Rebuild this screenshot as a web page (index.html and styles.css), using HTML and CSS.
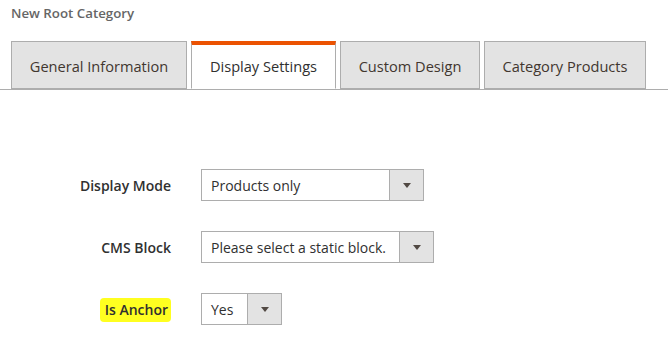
FILE: index.html
```html
<!DOCTYPE html>
<html>
<head>
<meta charset="utf-8">
<link rel="stylesheet" href="styles.css">
</head>
<body>
<div class="page">
  <div class="title">New Root Category</div>
  <div class="tabs">
    <div class="tab">General Information</div>
    <div class="tab active">Display Settings</div>
    <div class="tab">Custom Design</div>
    <div class="tab">Category Products</div>
  </div>
  <div class="form">
    <div class="row">
      <div class="label">Display Mode</div>
      <div class="select w1"><span class="val">Products only</span><span class="btn"><span class="arrow"></span></span></div>
    </div>
    <div class="row">
      <div class="label">CMS Block</div>
      <div class="select w2"><span class="val">Please select a static block.</span><span class="btn"><span class="arrow"></span></span></div>
    </div>
    <div class="row">
      <div class="label"><span class="hl">Is Anchor</span></div>
      <div class="select w3"><span class="val">Yes</span><span class="btn"><span class="arrow"></span></span></div>
    </div>
  </div>
</div>
</body>
</html>
```
FILE: styles.css
```css
html, body { margin: 0; padding: 0; background: #fff; }
body { font-family: "Open Sans", "Liberation Sans", sans-serif; color: #303030; }
.page { padding-top: 4px; }
.title { padding-left: 11px; font-size: 13.3px; font-weight: 600; color: #666; line-height: 18px; height: 18px; }
.tabs { display: flex; gap: 4px; margin-top: 19px; padding-left: 11px; border-bottom: 1px solid #adadad; height: 48px; }
.tab { box-sizing: border-box; height: 48px; margin-bottom: -1px; padding: 3px 10px 0; background: #e3e3e3; border: 1px solid #adadad; font-size: 14.6px; color: #41362f; display: flex; align-items: center; justify-content: center; line-height: 1; white-space: nowrap; }
.tab:nth-child(1) { width: 176px; }
.tab:nth-child(2) { width: 145px; }
.tab:nth-child(3) { width: 140px; }
.tab:nth-child(4) { width: 162px; }
.tab.active { background: #fff; border-top: 4px solid #eb5202; border-bottom-color: #fff; color: #303030; padding-top: 0; }
.form { padding-top: 79px; }
.row { display: flex; align-items: center; height: 32px; margin-bottom: 30px; }
.label { width: 171px; text-align: right; font-size: 14px; font-weight: 600; color: #303030; padding-right: 30px; box-sizing: content-box; flex: none; }
.hl { background: #ffff20; padding: 2px 3px 3px 5px; border-radius: 4px; }
.select { box-sizing: border-box; height: 32px; border: 1px solid #adadad; display: flex; align-items: stretch; font-size: 14px; color: #303030; }
.w1 { width: 223px; }
.w2 { width: 233px; }
.w3 { width: 81px; }
.val { flex: 1; padding-left: 9px; display: flex; align-items: center; white-space: nowrap; }
.btn { width: 33px; background: #e3e3e3; border-left: 1px solid #adadad; display: flex; align-items: center; justify-content: center; }
.arrow { width: 0; height: 0; border-left: 4px solid transparent; border-right: 4px solid transparent; border-top: 5px solid #514943; }
```
